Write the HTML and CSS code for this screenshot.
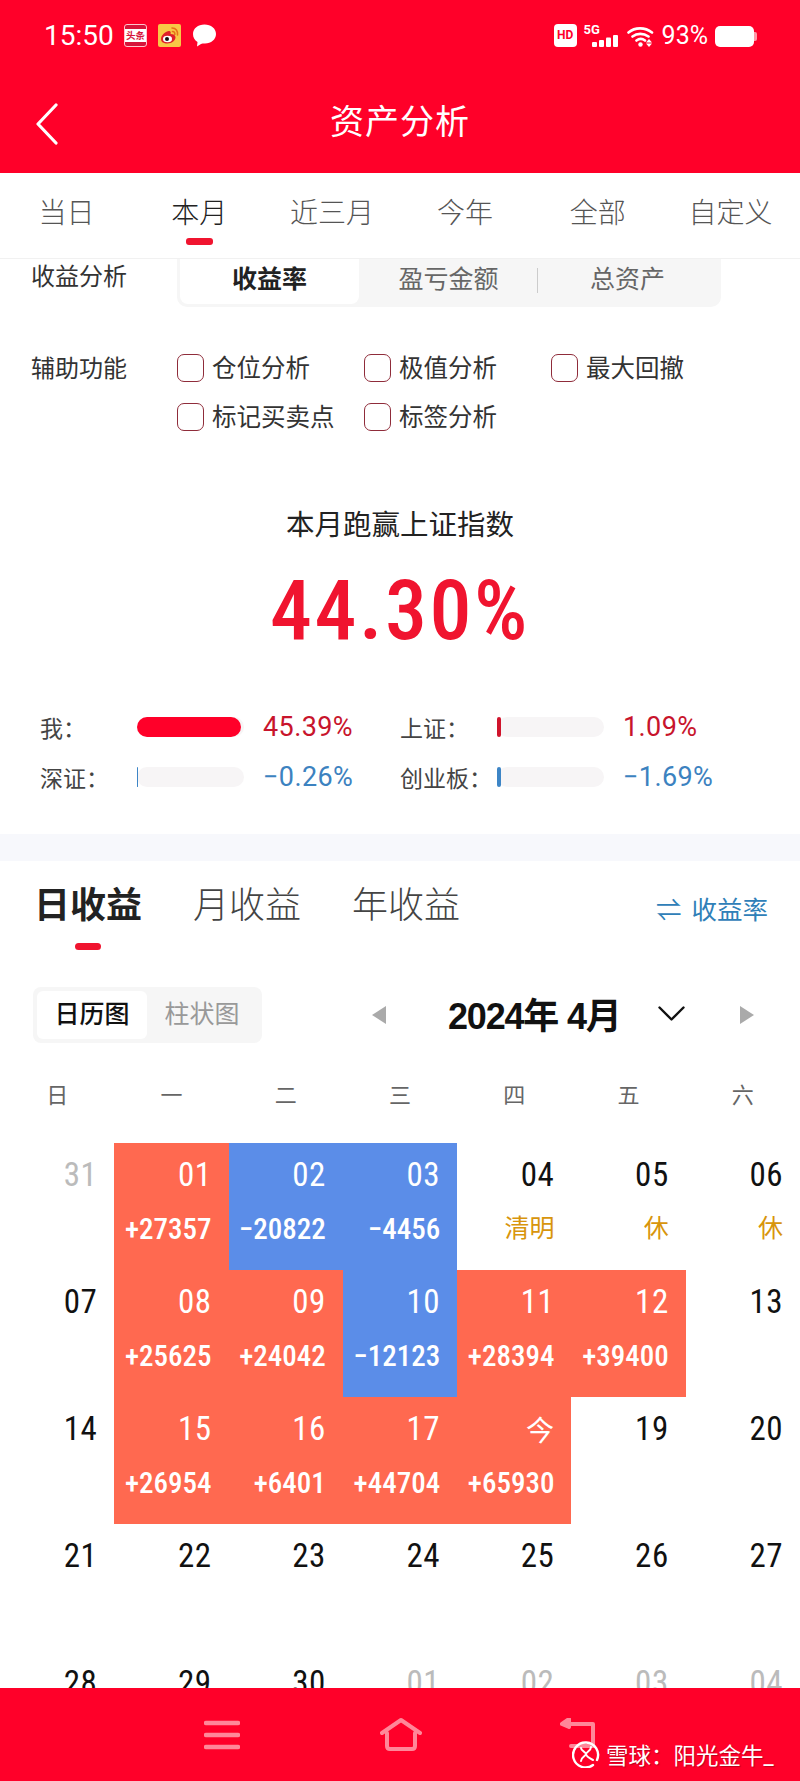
FILE: index.html
```html
<!DOCTYPE html>
<html lang="zh-CN">
<head>
    <meta charset="UTF-8">
    <title>资产分析</title>
    <link rel="stylesheet" href="styles.css">
</head>
<body>
    <header class="app-header">
        <div class="status-bar">
            <span class="clock">15:50</span>
            <span class="app-icon toutiao">头条</span>
            <svg class="app-icon" viewBox="0 0 23 23">
                <rect width="23" height="23" rx="2" fill="#f8c846" />
                <path d="M3 15c0-4 5-8 8-8 2 0 2 2 1.500 3 3 0 5 1 5 3.500 0 3-4 6-8 6s-6.500-1.500-6.500-4.500z" fill="#e0202a" />
                <ellipse cx="9.500" cy="15" rx="4.500" ry="3.300" fill="#fff" />
                <circle cx="9" cy="15" r="2" fill="#111" />
                <path d="M14 4c4 0 6 3 5.500 7M14.500 7.500c2 0 2.500 1.500 2.300 3" fill="none" stroke="#e8701a" stroke-width="1.600" stroke-linecap="round" />
            </svg>
            <svg class="app-icon bubble" viewBox="0 0 23 22">
                <path d="M11.500 0C18 0 23 4 23 9.500S18 19 12 19c-2 0-3 0-4 .5L4 22l.5-4.500C1.500 15.500 0 13 0 9.500 0 4 5 0 11.500 0z" fill="#fff" />
            </svg>
            <span class="status-right">
                <span class="hd">HD</span>
                <span class="signal">
                    <span class="five-g">5G</span>
                    <svg viewBox="0 0 27 12" width="27" height="12">
                        <rect x="0" y="7" width="5" height="5" rx="1" fill="#fff" />
                        <rect x="7" y="5" width="5" height="7" rx="1" fill="#fff" />
                        <rect x="14" y="2.500" width="5" height="9.500" rx="1" fill="#fff" />
                        <rect x="21" y="0" width="5" height="12" rx="1" fill="#fff" />
                    </svg>
                </span>
                <svg class="wifi" viewBox="0 0 27 21" width="27" height="21">
                    <path d="M1.500 6.500C8 1 18 1 25 6.500M5.500 10.500c4.500-3.500 11-3.500 16 0M9.500 14.500c2.500-2 6-2 8.500 0" fill="none" stroke="#fff" stroke-width="2.600" stroke-linecap="round" />
                    <circle cx="13.500" cy="18.500" r="2.200" fill="#fff" />
                    <path d="M22 13l3 3.500h-6zM22 21l3-3.500h-6z" fill="#fff" />
                </svg>
                <span class="battery-text">93%</span>
                <span class="battery"></span>
            </span>
        </div>
        <div class="title-bar">
            <svg class="back" viewBox="0 0 24 42" width="24" height="42">
                <path d="M21 2L3 21l18 19" fill="none" stroke="#fff" stroke-width="3.200" stroke-linecap="round" stroke-linejoin="round" />
            </svg>
            <h1 class="page-title">资产分析</h1>
        </div>
    </header>

    <main class="content">
        <nav class="range-tabs">
            <div class="range-tab">当日</div>
            <div class="range-tab active">本月</div>
            <div class="range-tab">近三月</div>
            <div class="range-tab">今年</div>
            <div class="range-tab">全部</div>
            <div class="range-tab">自定义</div>
        </nav>

        <section class="analysis">
            <div class="analysis-row">
                <div class="row-label">收益分析</div>
                <div class="segment">
                    <div class="segment-item active">收益率</div>
                    <div class="segment-item split">盈亏金额</div>
                    <div class="segment-item">总资产</div>
                </div>
            </div>
            <div class="options-row">
                <div class="row-label">辅助功能</div>
                <div class="options">
                    <div class="option"><span class="check"></span>仓位分析</div>
                    <div class="option"><span class="check"></span>极值分析</div>
                    <div class="option"><span class="check"></span>最大回撤</div>
                    <div class="option"><span class="check"></span>标记买卖点</div>
                    <div class="option"><span class="check"></span>标签分析</div>
                </div>
            </div>

            <div class="summary-title">本月跑赢上证指数</div>
            <div class="summary-value">44.30%</div>

            <div class="compare">
                <div class="compare-item">
                    <span class="compare-label">我：</span>
                    <span class="track"><span class="fill up" style="width: 104px"></span></span>
                    <span class="compare-value rise">45.39%</span>
                </div>
                <div class="compare-item">
                    <span class="compare-label">上证：</span>
                    <span class="track"><span class="fill up-dark" style="width: 4px"></span></span>
                    <span class="compare-value rise">1.09%</span>
                </div>
                <div class="compare-item">
                    <span class="compare-label">深证：</span>
                    <span class="track"><span class="fill down" style="width: 1px"></span></span>
                    <span class="compare-value fall">−0.26%</span>
                </div>
                <div class="compare-item">
                    <span class="compare-label">创业板：</span>
                    <span class="track"><span class="fill down" style="width: 4px"></span></span>
                    <span class="compare-value fall">−1.69%</span>
                </div>
            </div>
        </section>

        <div class="band"></div>

        <section class="income">
            <div class="income-tabs">
                <div class="income-tab active">日收益</div>
                <div class="income-tab">月收益</div>
                <div class="income-tab">年收益</div>
                <div class="income-link"><span class="swap">⇌</span>收益率</div>
            </div>

            <div class="calendar-bar">
                <div class="view-switch">
                    <div class="view-item active">日历图</div>
                    <div class="view-item">柱状图</div>
                </div>
                <span class="arrow arrow-left"></span>
                <div class="month-title">2024年 4月</div>
                <svg class="month-chevron" viewBox="0 0 27 15" width="27" height="15">
                    <path d="M1.500 1.500L13.500 13.500 25.500 1.500" fill="none" stroke="#111" stroke-width="2.400" stroke-linecap="round" stroke-linejoin="round" />
                </svg>
                <span class="arrow arrow-right"></span>
            </div>

            <div class="weekdays">
                <div>日</div><div>一</div><div>二</div><div>三</div><div>四</div><div>五</div><div>六</div>
            </div>

            <div class="calendar">
                <div class="day muted"><div class="date">31</div></div>
                <div class="day gain"><div class="date">01</div><div class="amount">+27357</div></div>
                <div class="day loss"><div class="date">02</div><div class="amount">−20822</div></div>
                <div class="day loss"><div class="date">03</div><div class="amount">−4456</div></div>
                <div class="day"><div class="date">04</div><div class="note">清明</div></div>
                <div class="day"><div class="date">05</div><div class="note">休</div></div>
                <div class="day"><div class="date">06</div><div class="note">休</div></div>

                <div class="day"><div class="date">07</div></div>
                <div class="day gain"><div class="date">08</div><div class="amount">+25625</div></div>
                <div class="day gain"><div class="date">09</div><div class="amount">+24042</div></div>
                <div class="day loss"><div class="date">10</div><div class="amount">−12123</div></div>
                <div class="day gain"><div class="date">11</div><div class="amount">+28394</div></div>
                <div class="day gain"><div class="date">12</div><div class="amount">+39400</div></div>
                <div class="day"><div class="date">13</div></div>

                <div class="day"><div class="date">14</div></div>
                <div class="day gain"><div class="date">15</div><div class="amount">+26954</div></div>
                <div class="day gain"><div class="date">16</div><div class="amount">+6401</div></div>
                <div class="day gain"><div class="date">17</div><div class="amount">+44704</div></div>
                <div class="day gain"><div class="date today">今</div><div class="amount">+65930</div></div>
                <div class="day"><div class="date">19</div></div>
                <div class="day"><div class="date">20</div></div>

                <div class="day"><div class="date">21</div></div>
                <div class="day"><div class="date">22</div></div>
                <div class="day"><div class="date">23</div></div>
                <div class="day"><div class="date">24</div></div>
                <div class="day"><div class="date">25</div></div>
                <div class="day"><div class="date">26</div></div>
                <div class="day"><div class="date">27</div></div>

                <div class="day"><div class="date">28</div></div>
                <div class="day"><div class="date">29</div></div>
                <div class="day"><div class="date">30</div></div>
                <div class="day muted"><div class="date">01</div></div>
                <div class="day muted"><div class="date">02</div></div>
                <div class="day muted"><div class="date">03</div></div>
                <div class="day muted"><div class="date">04</div></div>
            </div>
        </section>
    </main>

    <footer class="nav-bar">
        <svg class="nav-icon" viewBox="0 0 36 30" width="36" height="30">
            <path d="M2 3h32M2 15h32M2 27h32" fill="none" stroke="#ff8799" stroke-width="4.500" stroke-linecap="round" />
        </svg>
        <svg class="nav-icon" viewBox="0 0 42 34" width="42" height="34">
            <path d="M2 15L21 2l19 13M7 15v13c0 2 1 3 3 3h22c2 0 3-1 3-3V15" fill="none" stroke="#ff8799" stroke-width="4" stroke-linecap="round" stroke-linejoin="round" />
        </svg>
        <svg class="nav-icon" viewBox="0 0 38 36" width="38" height="36">
            <path d="M10 1L3 6l7 3zM6 6h28v22H12" fill="#ff8799" fill-opacity="0" stroke="#ff8799" stroke-width="4" stroke-linecap="round" stroke-linejoin="round" />
        </svg>
        <div class="watermark">
            <svg viewBox="0 0 28 28" width="28" height="28">
                <path d="M21 25A12.500 12.500 0 1 1 25 20" fill="none" stroke="#fff" stroke-width="2.400" stroke-linecap="round" />
                <path d="M9 21c0-4 5-5 5-7S9 11 9 8M19 7c0 4-5 5-5 7s3 4 7 6" fill="none" stroke="#fff" stroke-width="2" stroke-linecap="round" />
            </svg>
            <span>雪球：阳光金牛_</span>
        </div>
    </footer>
</body>
</html>
```

FILE: styles.css
```css
html, body {
    margin: 0;
    height: 100%;
}

body {
    width: 800px;
    height: 1781px;
    display: flex;
    flex-direction: column;
    overflow: hidden;
    background: #fff;
    color: #333;
    font-family: Roboto, "Noto Sans CJK SC", sans-serif;
}

/* header */
.app-header {
    height: 173px;
    background: #ff0029;
    color: #fff;
    flex: none;
}

.status-bar {
    height: 70px;
    padding: 24px 43px 0 44px;
    box-sizing: border-box;
    display: flex;
    align-items: flex-start;
}

.clock {
    font-size: 28px;
    line-height: 23px;
    width: 69px;
    margin-right: 11px;
}

.app-icon {
    width: 23px;
    height: 23px;
    margin-right: 11px;
    display: block;
}

.toutiao {
    box-sizing: border-box;
    border: 1px solid #ffc4cc;
    background: linear-gradient(#d6143a 0 4px, #fff 4px 17px, #d6143a 17px);
    color: #d6143a;
    border-radius: 3px;
    font-size: 9.500px;
    font-weight: 700;
    line-height: 21px;
    text-align: center;
    white-space: nowrap;
    overflow: hidden;
}

.bubble {
    margin-left: 1px;
}

.status-right {
    margin-left: auto;
    display: flex;
    align-items: flex-start;
}

.hd {
    width: 23px;
    height: 23px;
    background: #fff;
    color: #ff0029;
    border-radius: 4px;
    font-size: 12px;
    font-weight: 700;
    line-height: 23px;
    text-align: center;
    margin-right: 7px;
}

.signal {
    width: 35px;
    height: 23px;
    position: relative;
    margin-right: 8px;
}

.five-g {
    font-size: 13px;
    font-weight: 700;
    line-height: 11px;
    display: block;
}

.signal svg {
    position: absolute;
    right: 0;
    bottom: 0;
}

.wifi {
    margin-top: 2px;
    margin-right: 8px;
}

.battery-text {
    font-size: 25px;
    line-height: 23px;
    margin-right: 7px;
}

.battery {
    width: 39px;
    height: 21px;
    margin: 2px 3px 0 0;
    background: #fff;
    border-radius: 5px;
    position: relative;
}

.battery::after {
    content: "";
    position: absolute;
    right: -3px;
    top: 6px;
    width: 3px;
    height: 9px;
    border-radius: 0 2px 2px 0;
    background: #ff9aa8;
}

.title-bar {
    height: 103px;
    position: relative;
    display: flex;
    align-items: center;
    justify-content: center;
}

.back {
    position: absolute;
    left: 35px;
    top: 33px;
}

.page-title {
    margin: 0 0 4px;
    font-size: 34px;
    font-weight: 400;
    letter-spacing: 1px;
}

.content {
    flex: 1;
    min-height: 0;
    overflow: hidden;
}

/* range tabs */
.range-tabs {
    display: grid;
    grid-template-columns: repeat(6, 1fr);
    height: 85px;
    padding-right: 3px;
    border-bottom: 1px solid #f1f1f1;
    font-size: 28px;
    font-weight: 300;
    color: #555;
}

.range-tab {
    display: flex;
    flex-direction: column;
    align-items: center;
    padding-top: 21px;
    line-height: 40px;
}

.range-tab.active {
    color: #222;
}

.range-tab.active::after {
    content: "";
    width: 27px;
    height: 7px;
    margin-top: 4px;
    border-radius: 3px;
    background: #f0142f;
}

/* analysis */
.analysis {
    padding-bottom: 32px;
}

.analysis-row {
    display: flex;
    padding-left: 31px;
}

.row-label {
    width: 146px;
    font-size: 24px;
    line-height: 36px;
    color: #333;
    flex: none;
}

.segment {
    display: flex;
    width: 538px;
    height: 45px;
    padding: 0 3px 3px;
    background: #f6f6f6;
    border-radius: 0 0 10px 10px;
    font-size: 25px;
    color: #666;
}

.segment-item {
    width: 179px;
    height: 45px;
    line-height: 41px;
    text-align: center;
    position: relative;
}

.segment-item.active {
    background: #fff;
    border-radius: 0 0 8px 8px;
    color: #222;
    font-weight: 700;
}

.segment-item.split::after {
    content: "";
    position: absolute;
    right: 0;
    top: 9px;
    width: 1px;
    height: 25px;
    background: #ccc;
}

.options-row {
    display: flex;
    margin-top: 38px;
    padding-left: 31px;
}

.options-row .row-label {
    line-height: 49px;
}

.options {
    display: grid;
    grid-template-columns: repeat(3, 187px);
    grid-auto-rows: 49px;
    font-size: 24.500px;
    line-height: 48px;
    color: #333;
}

.option {
    display: flex;
    align-items: flex-start;
    gap: 8px;
}

.check {
    width: 27px;
    height: 28px;
    margin-top: 9px;
    box-sizing: border-box;
    border: 1.500px solid #8f2c3a;
    border-radius: 7px;
}

.summary-title {
    margin-top: 63px;
    font-size: 28.500px;
    line-height: 40px;
    text-align: center;
    color: #222;
}

.summary-value {
    margin-top: 20px;
    font-size: 84px;
    font-stretch: 80%;
    font-weight: 500;
    letter-spacing: 2.500px;
    line-height: 90px;
    text-align: center;
    color: #f0142f;
}

.compare {
    display: grid;
    grid-template-columns: 360px 360px;
    grid-auto-rows: 50px;
    margin-top: 46px;
    padding-left: 40px;
}

.compare-item {
    display: flex;
    align-items: center;
}

.compare-label {
    width: 97px;
    font-size: 23px;
    color: #444;
    white-space: nowrap;
}

.track {
    width: 107px;
    height: 20px;
    margin-right: 19px;
    background: #f7f5f6;
    border-radius: 10px;
}

.fill {
    display: block;
    height: 100%;
    border-radius: 2px;
}

.fill.up {
    background: #ff0029;
    border-radius: 10px;
}

.fill.up-dark {
    background: #d0142c;
}

.fill.down {
    background: #3d85c6;
}

.compare-value {
    font-size: 27px;
    letter-spacing: 0.4px;
}

.rise {
    color: #c8142c;
}

.fall {
    color: #3c82c0;
}

.band {
    height: 27px;
    background: #f7f8fc;
}

/* income */
.income-tabs {
    display: flex;
    align-items: flex-start;
    gap: 51px;
    padding: 20px 32px 0 34px;
}

.income-tab {
    display: flex;
    flex-direction: column;
    align-items: center;
    font-size: 36px;
    font-weight: 300;
    line-height: 50px;
    color: #444;
}

.income-tab.active {
    color: #222;
    font-weight: 700;
}

.income-tab.active::after {
    content: "";
    width: 26px;
    height: 7px;
    margin-top: 12px;
    border-radius: 4px;
    background: #f0142f;
}

.income-link {
    margin-left: auto;
    margin-top: 4px;
    font-size: 25.500px;
    line-height: 50px;
    color: #2f80b8;
}

.swap {
    margin-right: 10px;
}

.calendar-bar {
    display: flex;
    align-items: center;
    height: 56px;
    margin-top: 37px;
    padding-left: 33px;
}

.view-switch {
    display: flex;
    width: 229px;
    height: 56px;
    box-sizing: border-box;
    padding: 4px;
    background: #f6f6f6;
    border-radius: 8px;
    font-size: 25px;
    line-height: 48px;
    color: #999;
}

.view-item {
    width: 110px;
    text-align: center;
}

.view-item.active {
    background: #fff;
    border-radius: 6px;
    color: #111;
    font-weight: 500;
}

.arrow {
    width: 0;
    height: 0;
    border-top: 9px solid transparent;
    border-bottom: 9px solid transparent;
}

.arrow-left {
    margin-left: 110px;
    border-right: 14px solid #aaa;
}

.arrow-right {
    margin-left: 55px;
    border-left: 14px solid #aaa;
}

.month-title {
    width: 172px;
    margin: 0 0 4px 62px;
    font-family: "Liberation Sans", "Noto Sans CJK SC", sans-serif;
    font-size: 36px;
    font-weight: 700;
    letter-spacing: -1.200px;
    color: #111;
    white-space: nowrap;
}

.month-chevron {
    margin-left: 38px;
    margin-bottom: 4px;
}

.weekdays {
    display: grid;
    grid-template-columns: repeat(7, 1fr);
    margin: 33px 0 27px;
    font-size: 22px;
    line-height: 40px;
    text-align: center;
    color: #666;
}

.calendar {
    display: grid;
    grid-template-columns: repeat(7, 1fr);
    grid-auto-rows: 127px;
}

.day {
    box-sizing: border-box;
    padding: 14px 17px 0 0;
    text-align: right;
}

.date {
    font-size: 33px;
    font-stretch: 80%;
    letter-spacing: 0.5px;
    line-height: 36px;
    color: #111;
}

.date.today {
    font-family: "Noto Sans CJK SC", sans-serif;
    font-size: 28px;
}

.amount {
    margin-top: 18px;
    font-size: 29px;
    font-stretch: 80%;
    font-weight: 500;
    line-height: 36px;
    white-space: nowrap;
}

.note {
    margin-top: 18px;
    font-size: 25px;
    line-height: 36px;
    color: #d8950c;
}

.gain, .loss {
    color: #fff;
}

.gain .date, .loss .date {
    color: #fff;
}

.gain {
    background: #ff6950;
}

.loss {
    background: #5b8de8;
}

.muted .date {
    color: #bbb;
}

/* bottom nav */
.nav-bar {
    height: 93px;
    flex: none;
    position: relative;
    display: flex;
    align-items: flex-start;
    background: #ff0029;
}

.nav-icon {
    position: absolute;
    top: 30px;
}

.nav-icon:nth-child(1) {
    left: 204px;
    top: 32px;
}

.nav-icon:nth-child(2) {
    left: 380px;
}

.nav-icon:nth-child(3) {
    left: 559px;
}

.watermark {
    position: absolute;
    left: 572px;
    top: 50px;
    display: flex;
    align-items: center;
    gap: 6px;
    font-size: 22.500px;
    color: #fff;
    text-shadow: 1px 1px 1px rgba(120, 0, 20, 0.5);
}
```
